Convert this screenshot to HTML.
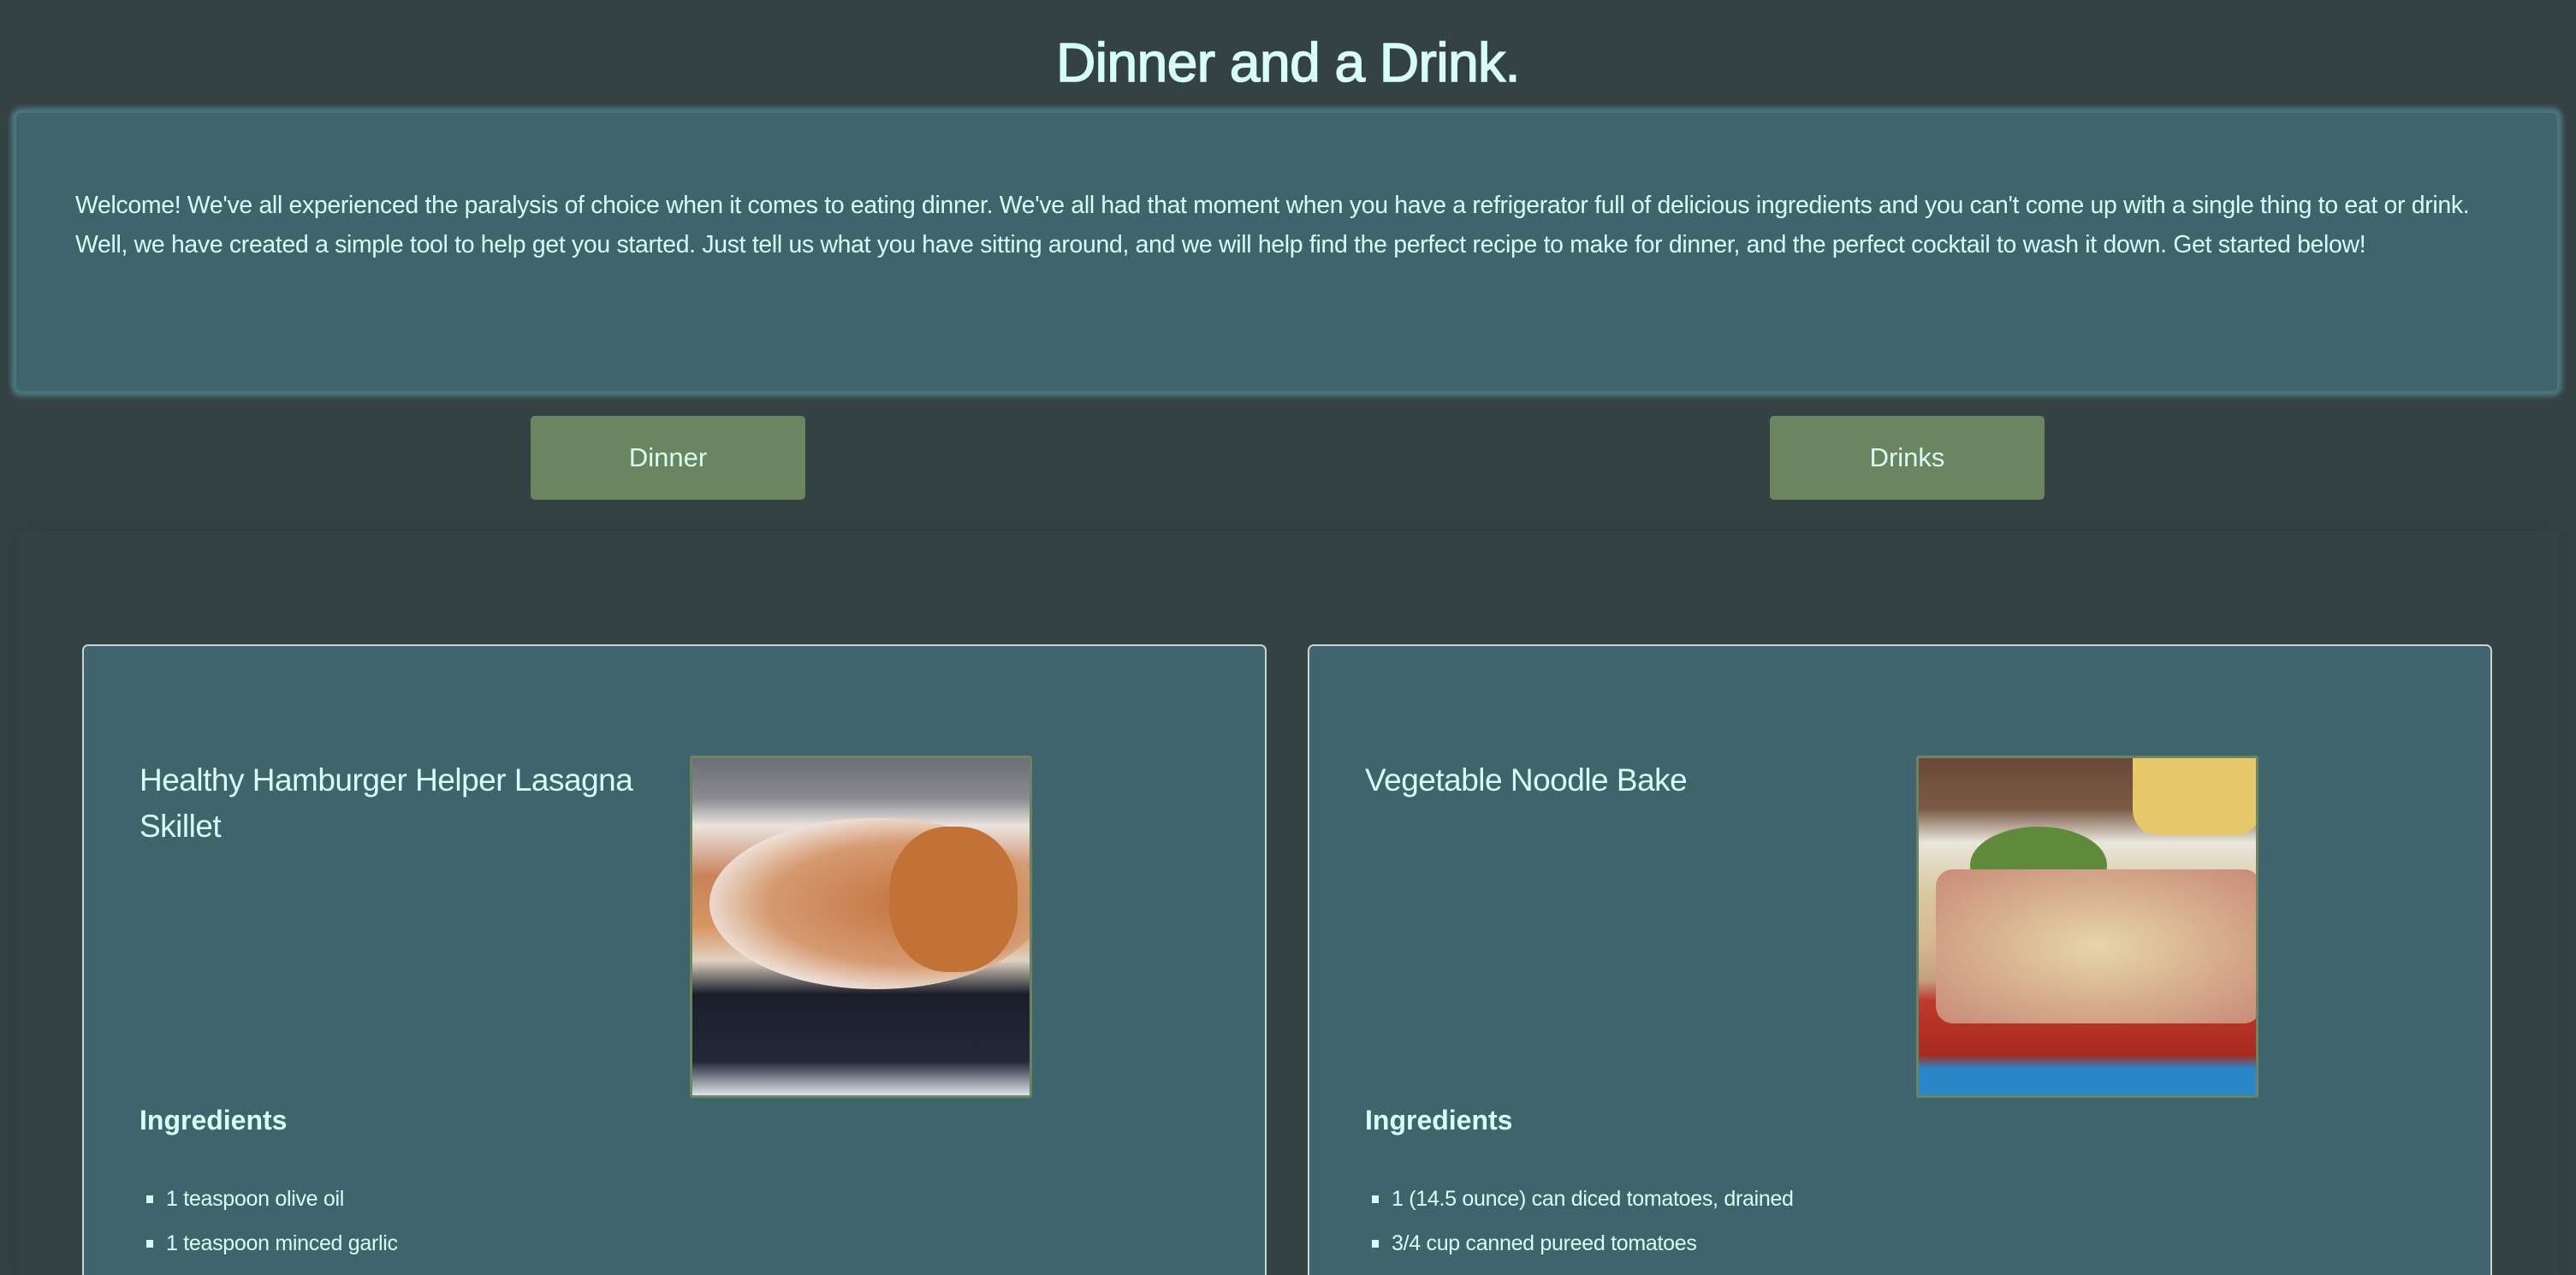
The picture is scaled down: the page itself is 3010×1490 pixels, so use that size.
<!DOCTYPE html>
<html style="width:3010px;height:1490px;overflow:hidden"><head><meta charset="utf-8"><style>
*{box-sizing:border-box;margin:0;padding:0}
body{width:3010px;height:1490px;overflow:hidden;background:#354244;font-family:"Liberation Sans",sans-serif;color:#d6fff6;position:relative}
.abs{position:absolute}
h1{position:absolute;left:0;width:3010px;top:36px;text-align:center;font-size:64px;font-weight:normal;letter-spacing:-0.5px;color:#d6fff6;-webkit-text-stroke:1.5px #d6fff6}
.welcome{left:19px;top:132px;width:2969px;height:325px;background:#40646b;border-radius:6px;box-shadow:0 0 6px 6px #4b7880}
.welcome p{position:absolute;left:69px;font-size:28.4px;white-space:nowrap;letter-spacing:-0.3px}
.btn{top:486px;width:321px;height:98px;background:#6a8560;border-radius:5px;font-size:31px;text-align:center;line-height:98px}
.wrap{left:20px;top:620px;width:2970px;height:870px;box-shadow:0 0 20px 4px #313d3f;background:#354244}
.card{top:753px;width:1384px;height:737px;background:#40646b;border:2px solid #c9d3d3;border-bottom:none;border-radius:7px 7px 0 0}
.card h2{position:absolute;left:65px;top:130px;width:600px;font-size:37px;font-weight:normal;line-height:54px;letter-spacing:-0.5px}
.card h3{position:absolute;left:65px;top:536px;font-size:32px}
.card ul{position:absolute;left:65px;top:620px;list-style:none;font-size:25px}
.card li{height:52px;line-height:52px;position:relative;padding-left:31px;letter-spacing:-0.3px}
.card li:before{content:"";position:absolute;left:8px;top:22px;width:8px;height:9px;background:#d6fff6}
.img{position:absolute;left:708px;top:128px;width:400px;height:400px;border:3px solid #6a8560;border-radius:3px;overflow:hidden}
</style></head><body>
<h1>Dinner and a Drink.</h1>
<div class="abs welcome">
<p style="top:92px">Welcome! We've all experienced the paralysis of choice when it comes to eating dinner. We've all had that moment when you have a refrigerator full of delicious ingredients and you can't come up with a single thing to eat or drink.</p>
<p style="top:138px">Well, we have created a simple tool to help get you started. Just tell us what you have sitting around, and we will help find the perfect recipe to make for dinner, and the perfect cocktail to wash it down. Get started below!</p>
</div>
<div class="abs btn" style="left:620px">Dinner</div>
<div class="abs btn" style="left:2068px">Drinks</div>
<div class="abs wrap"></div>
<div class="abs card" style="left:96px">
<h2>Healthy Hamburger Helper Lasagna Skillet</h2>
<div class="img" style="background:linear-gradient(180deg,#6b6e74 0%,#8a8c92 12%,#eae4e0 20%,#c9825a 35%,#d89560 50%,#e0d2c0 60%,#1b1f2c 70%,#232838 90%,#dfe3ea 100%)">
<div class="abs" style="left:20px;top:70px;width:390px;height:200px;border-radius:50%;background:radial-gradient(ellipse at 60% 50%,#c47440,#d59a70 50%,#efe6e0 75%,transparent 78%)"></div>
<div class="abs" style="left:230px;top:80px;width:150px;height:170px;border-radius:45%;background:#c27235"></div>
</div>
<h3>Ingredients</h3>
<ul><li>1 teaspoon olive oil</li><li>1 teaspoon minced garlic</li></ul>
</div>
<div class="abs card" style="left:1528px">
<h2>Vegetable Noodle Bake</h2>
<div class="img" style="left:709px;background:linear-gradient(180deg,#6a4838 0%,#7b5a45 15%,#e9e6dc 25%,#d8c8a0 40%,#d6b890 55%,#c0a080 66%,#c0392b 72%,#a82a1e 88%,#2a86c6 92%,#2a86c6 100%)">
<div class="abs" style="left:250px;top:0;width:150px;height:90px;background:#e5c86a;border-radius:0 0 30px 30px"></div>
<div class="abs" style="left:60px;top:80px;width:160px;height:90px;border-radius:50%;background:#5f8a3a"></div>
<div class="abs" style="left:20px;top:130px;width:380px;height:180px;border-radius:20px;background:radial-gradient(ellipse,#e6d6a8,#d4a88a 60%,#c98a78)"></div>
</div>
<h3>Ingredients</h3>
<ul><li>1 (14.5 ounce) can diced tomatoes, drained</li><li>3/4 cup canned pureed tomatoes</li></ul>
</div>
</body></html>
